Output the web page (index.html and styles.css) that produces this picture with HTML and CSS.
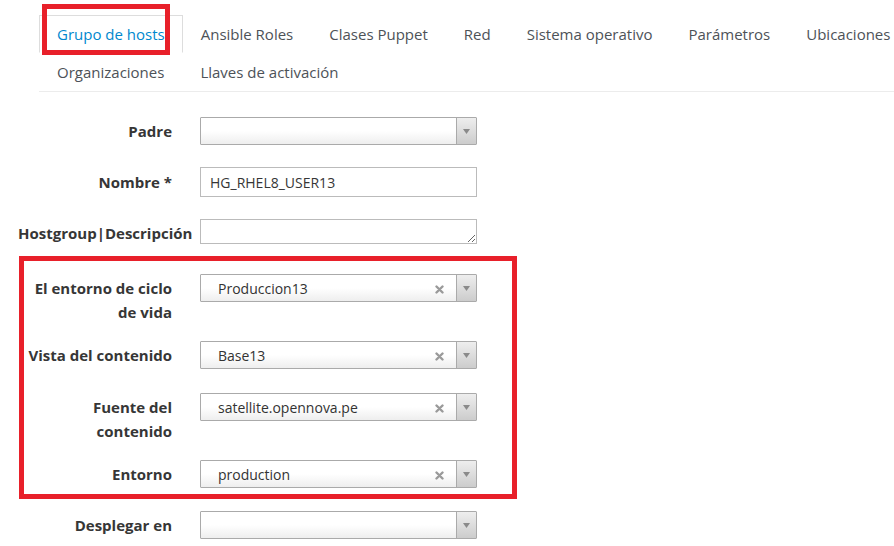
FILE: index.html
```html
<!DOCTYPE html>
<html lang="es">
<head>
<meta charset="utf-8">
<title>Grupo de hosts</title>
<link rel="stylesheet" href="styles.css">
</head>
<body>
<div class="page">
  <ul class="tabs">
    <li class="tab active">Grupo de hosts</li>
    <li class="tab">Ansible Roles</li>
    <li class="tab">Clases Puppet</li>
    <li class="tab">Red</li>
    <li class="tab">Sistema operativo</li>
    <li class="tab">Parámetros</li>
    <li class="tab">Ubicaciones</li>
    <li class="tab">Organizaciones</li>
    <li class="tab">Llaves de activación</li>
  </ul>

  <form class="form">
    <div class="group g-padre">
      <label class="label">Padre</label>
      <div class="select">
        <span class="value"></span>
        <span class="arrow"><svg width="7" height="5" viewBox="0 0 7 5"><path d="M0 0H7L3.5 5Z" fill="#8a8a8a"/></svg></span>
      </div>
    </div>
    <div class="group g-nombre">
      <label class="label">Nombre *</label>
      <input class="text" type="text" value="HG_RHEL8_USER13">
    </div>
    <div class="group g-desc">
      <label class="label">Hostgroup|Descripción</label>
      <textarea class="area"></textarea>
    </div>
    <div class="group two">
      <label class="label">El entorno de ciclo de vida</label>
      <div class="select">
        <span class="value">Produccion13</span>
        <span class="clear"><svg width="9" height="9" viewBox="0 0 9 9"><path d="M1.5 1.5L7.5 7.5M7.5 1.5L1.5 7.5" stroke="#9a9a9a" stroke-width="2.4" stroke-linecap="round"/></svg></span>
        <span class="arrow"><svg width="7" height="5" viewBox="0 0 7 5"><path d="M0 0H7L3.5 5Z" fill="#8a8a8a"/></svg></span>
      </div>
    </div>
    <div class="group g-vista">
      <label class="label">Vista del contenido</label>
      <div class="select">
        <span class="value">Base13</span>
        <span class="clear"><svg width="9" height="9" viewBox="0 0 9 9"><path d="M1.5 1.5L7.5 7.5M7.5 1.5L1.5 7.5" stroke="#9a9a9a" stroke-width="2.4" stroke-linecap="round"/></svg></span>
        <span class="arrow"><svg width="7" height="5" viewBox="0 0 7 5"><path d="M0 0H7L3.5 5Z" fill="#8a8a8a"/></svg></span>
      </div>
    </div>
    <div class="group two">
      <label class="label">Fuente del contenido</label>
      <div class="select">
        <span class="value">satellite.opennova.pe</span>
        <span class="clear"><svg width="9" height="9" viewBox="0 0 9 9"><path d="M1.5 1.5L7.5 7.5M7.5 1.5L1.5 7.5" stroke="#9a9a9a" stroke-width="2.4" stroke-linecap="round"/></svg></span>
        <span class="arrow"><svg width="7" height="5" viewBox="0 0 7 5"><path d="M0 0H7L3.5 5Z" fill="#8a8a8a"/></svg></span>
      </div>
    </div>
    <div class="group g-entorno">
      <label class="label">Entorno</label>
      <div class="select">
        <span class="value">production</span>
        <span class="clear"><svg width="9" height="9" viewBox="0 0 9 9"><path d="M1.5 1.5L7.5 7.5M7.5 1.5L1.5 7.5" stroke="#9a9a9a" stroke-width="2.4" stroke-linecap="round"/></svg></span>
        <span class="arrow"><svg width="7" height="5" viewBox="0 0 7 5"><path d="M0 0H7L3.5 5Z" fill="#8a8a8a"/></svg></span>
      </div>
    </div>
    <div class="group">
      <label class="label">Desplegar en</label>
      <div class="select">
        <span class="value"></span>
        <span class="arrow"><svg width="7" height="5" viewBox="0 0 7 5"><path d="M0 0H7L3.5 5Z" fill="#8a8a8a"/></svg></span>
      </div>
    </div>
  </form>

  <div class="mark mark-tab"></div>
  <div class="mark mark-form"></div>
</div>
</body>
</html>
```

FILE: styles.css
```css
html, body {
  margin: 0;
  padding: 0;
  background: #fff;
  overflow: hidden;
}

.page {
  position: relative;
  width: 894px;
  height: 546px;
  box-sizing: border-box;
  padding-top: 15px;
  font-family: "Open Sans", "Liberation Sans", sans-serif;
  color: #363636;
}

.tabs {
  list-style: none;
  margin: 0 0 0 39px;
  padding: 0;
  width: 880px;
  display: flex;
  flex-wrap: wrap;
  border-bottom: 1px solid #ececec;
}

.tab {
  padding: 0 17px;
  line-height: 36px;
  height: 36px;
  border: 1px solid transparent;
  font-size: 15px;
  color: #4d5258;
  white-space: nowrap;
}

.tab.active {
  color: #0088ce;
  border-color: #dddddd;
  border-bottom-color: transparent;
}

.form {
  margin-top: 25px;
  padding-left: 18px;
}

.group {
  display: flex;
  align-items: flex-start;
  margin-bottom: 23px;
}

.g-padre, .g-nombre { margin-bottom: 22px; }
.g-desc { margin-bottom: 29px; }
.two { margin-bottom: 17px; }
.g-vista { margin-bottom: 24px; }

.label {
  width: 154px;
  flex: none;
  text-align: right;
  font-weight: 700;
  font-size: 15px;
  line-height: 24px;
  padding-top: 2px;
  margin-right: 28px;
  color: #363636;
}

.g-nombre .label { padding-top: 3px; }

.select {
  width: 277px;
  height: 28px;
  box-sizing: border-box;
  border: 1px solid #aaaaaa;
  border-radius: 1px;
  background: linear-gradient(to bottom, #ffffff 0%, #ffffff 50%, #eeeeee 100%);
  display: flex;
  align-items: center;
  font-family: "Open Sans", "Liberation Sans", sans-serif;
  font-size: 14px;
  color: #333;
}

.value {
  flex: 1;
  padding-left: 17px;
  white-space: nowrap;
  overflow: hidden;
}

.clear {
  width: 9px;
  height: 9px;
  display: flex;
  margin-right: 12px;
  margin-top: 2px;
}

.arrow {
  width: 20px;
  height: 100%;
  flex: none;
  box-sizing: border-box;
  border-left: 1px solid #aaaaaa;
  background: linear-gradient(to bottom, #eeeeee 0%, #cccccc 100%);
  display: flex;
  align-items: center;
  justify-content: center;
}

.text {
  width: 277px;
  height: 30px;
  box-sizing: border-box;
  border: 1px solid #bbbbbb;
  padding: 0 9px;
  margin: 0;
  font-family: "Open Sans", "Liberation Sans", sans-serif;
  font-size: 14px;
  color: #363636;
  outline: none;
}

.area {
  width: 277px;
  height: 25px;
  box-sizing: border-box;
  border: 1px solid #bbbbbb;
  margin: 0;
  padding: 2px 8px;
  font-family: "Open Sans", "Liberation Sans", sans-serif;
  font-size: 14px;
  resize: vertical;
}

.mark {
  position: absolute;
  border: 5px solid #e8202a;
  box-sizing: border-box;
  pointer-events: none;
}

.mark-tab {
  left: 42px;
  top: 4px;
  width: 128px;
  height: 51px;
}

.mark-form {
  left: 19px;
  top: 256px;
  width: 498px;
  height: 243px;
}
```
